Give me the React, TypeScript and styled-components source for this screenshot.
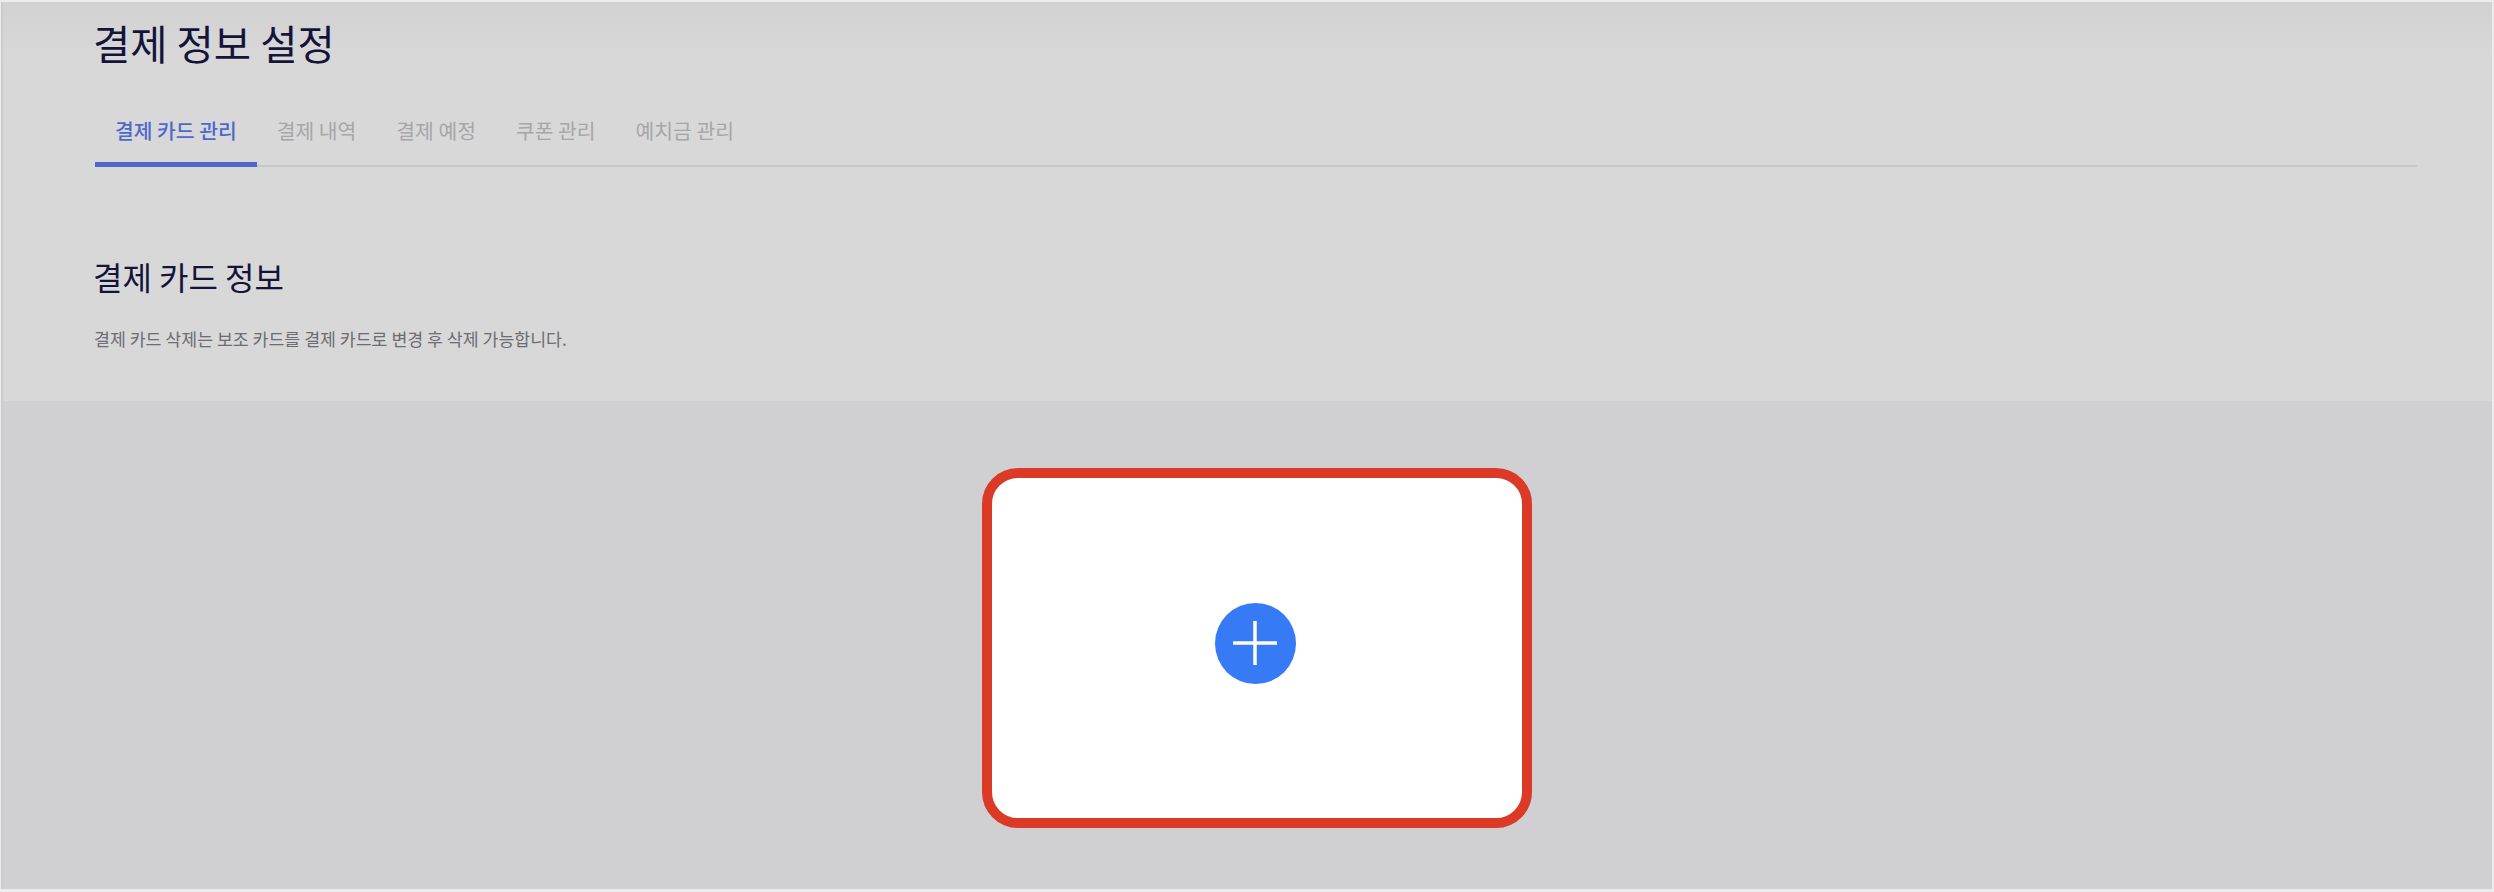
import React from 'react';
import styled, { createGlobalStyle } from 'styled-components';

const GlobalStyle = createGlobalStyle`
  html, body {
    margin: 0;
    padding: 0;
    background: #ececec;
  }
  * {
    box-sizing: border-box;
  }
`;

const Page = styled.div`
  width: 2494px;
  height: 892px;
  padding: 2px 2px 3px 1px;
  display: flex;
  flex-direction: column;
  overflow: hidden;
  font-family: "Noto Sans CJK KR", "Noto Sans", sans-serif;
`;

const Header = styled.div`
  height: 399px;
  padding: 0 75px 0 92px;
  border-left: 2px solid #cbcbcf;
  background: linear-gradient(to bottom, #d2d2d2 0, #d8d8d8 60px);
  flex-shrink: 0;
`;

const PageTitle = styled.h1`
  margin: 0 0 0 -2px;
  padding-top: 12px;
  height: 101px;
  font-size: 40.5px;
  line-height: 58px;
  font-weight: 400;
  color: #14143a;
`;

const TabBar = styled.div`
  display: flex;
  height: 64px;
  border-bottom: 2px solid #c6c6cb;
`;

const Tab = styled.div<{ $active?: boolean }>`
  height: 64px;
  padding: 9px 20px 0;
  font-size: 20.4px;
  line-height: 36px;
  color: ${p => (p.$active ? '#4f68cc' : '#a6a6a9')};
  border-bottom: ${p => (p.$active ? '5px solid #5068c8' : 'none')};
  font-weight: ${p => (p.$active ? 500 : 400)};
`;

const SectionTitle = styled.h2`
  margin: 0 0 0 -2px;
  padding-top: 86px;
  font-size: 32px;
  line-height: 46px;
  font-weight: 400;
  color: #14143a;
`;

const Notice = styled.p`
  margin: 0 0 0 -1px;
  padding-top: 28px;
  font-size: 17.3px;
  line-height: 24px;
  color: #6c6c72;
`;

const CardArea = styled.div`
  flex: 1;
  display: flex;
  justify-content: center;
  padding: 67px 0 0 19px;
  border-left: 2px solid #cbcbcf;
  background: #d0d0d2;
`;

const AddCard = styled.div`
  width: 550px;
  height: 360px;
  padding: 0 4px 10px 0;
  border: 10px solid #db3b26;
  border-radius: 36px;
  background: #fff;
  display: flex;
  align-items: center;
  justify-content: center;
`;

const AddButton = styled.div`
  width: 81px;
  height: 81px;
  border-radius: 50%;
  background: #377af6;
  display: flex;
  align-items: center;
  justify-content: center;
`;

const tabs = ['결제 카드 관리', '결제 내역', '결제 예정', '쿠폰 관리', '예치금 관리'];

const App: React.FC = () => {
  return (
    <Page>
      <GlobalStyle />
      <Header>
        <PageTitle>결제 정보 설정</PageTitle>
        <TabBar>
          {tabs.map((tab, i) => (
            <Tab key={tab} $active={i === 0}>
              {tab}
            </Tab>
          ))}
        </TabBar>
        <SectionTitle>결제 카드 정보</SectionTitle>
        <Notice>결제 카드 삭제는 보조 카드를 결제 카드로 변경 후 삭제 가능합니다.</Notice>
      </Header>
      <CardArea>
        <AddCard>
          <AddButton>
            <svg width="44" height="44" viewBox="0 0 44 44">
              <path d="M22 0V44M0 22H44" stroke="#fff" strokeWidth="3.5" fill="none" />
            </svg>
          </AddButton>
        </AddCard>
      </CardArea>
    </Page>
  );
};

export default App;
